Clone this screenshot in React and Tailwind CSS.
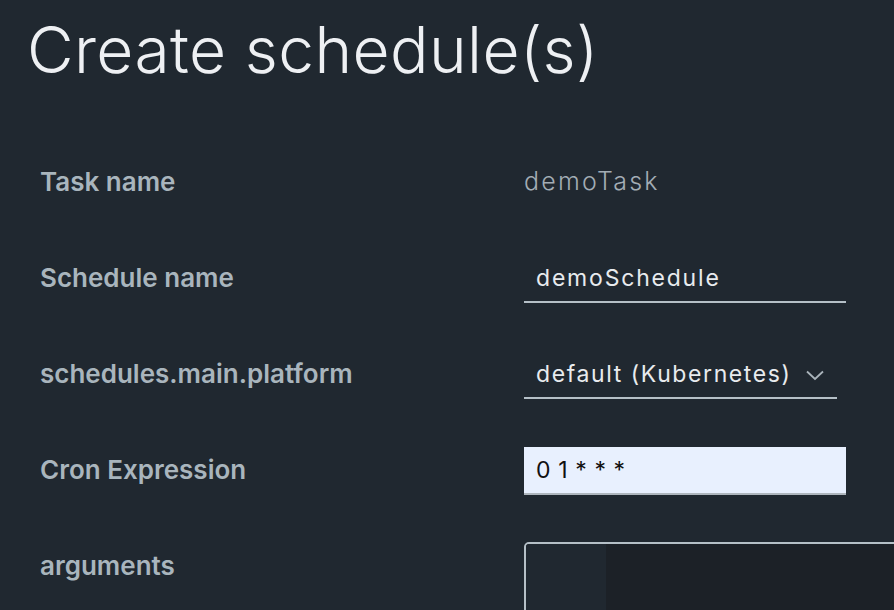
import React from 'react'

const fieldFont = { fontFamily: 'Inter, "Noto Sans", sans-serif' }

function Row({ label, children }) {
    return (
        <div className="flex items-center h-[96px]">
            <div className="w-[484px] h-[96px] pb-[4px] flex items-center shrink-0 text-[26px] font-semibold text-[#a9b5bd]">
                {label}
            </div>
            <div className="flex-1 h-full flex items-center">{children}</div>
        </div>
    )
}

export default function App() {
    return (
        <div className="h-[610px] w-[894px] overflow-hidden bg-[#202830]" style={fieldFont}>
            <h1 className="pl-[27px] pt-[10px] h-[135px] text-[64px] font-light leading-[80px] text-[#eef0f3] tracking-[0.4px]">
                Create schedule(s)
            </h1>
            <div className="pl-[40px]">
                <Row label="Task name">
                    <span className="text-[25px] font-light text-[#a3adb5] tracking-[2.2px] -mt-[2px]">demoTask</span>
                </Row>
                <Row label="Schedule name">
                    <div className="w-[322px] h-[48px] border-b-2 border-[#b5c0c7] flex items-center px-[12px]">
                        <span className="text-[23px] text-[#e8ebee] tracking-[1.8px]">demoSchedule</span>
                    </div>
                </Row>
                <Row label="schedules.main.platform">
                    <div className="w-[313px] h-[48px] border-b-2 border-[#b5c0c7] flex items-center pl-[12px] pr-[13px]">
                        <span className="text-[23px] text-[#e8ebee] flex-1 tracking-[1.6px]">default (Kubernetes)</span>
                        <svg width="18" height="11" viewBox="0 0 18 11" fill="none" className="mt-[2px]">
                            <path d="M1 1.5 L9 9 L17 1.5" stroke="#aab4bb" strokeWidth="1.8" />
                        </svg>
                    </div>
                </Row>
                <Row label="Cron Expression">
                    <div className="w-[322px] h-[48px] bg-[#e8f0fe] border-b-2 border-[#aeb6bd] flex items-center px-[12px]">
                        <span className="text-[23px] text-[#111] tracking-[0.6px]">0 1 * * *</span>
                    </div>
                </Row>
                <div className="flex items-start">
                    <div className="w-[484px] h-[96px] pb-[4px] flex items-center shrink-0 text-[26px] font-semibold text-[#a9b5bd]">
                        arguments
                    </div>
                    <div className="flex-1 mt-[23px] h-[200px] border-2 border-[#b5c0c7] rounded-[5px] flex overflow-hidden -mr-[10px]">
                        <div className="w-[80px] bg-[#202830]"></div>
                        <div className="flex-1 bg-[#1c2127]"></div>
                    </div>
                </div>
            </div>
        </div>
    )
}
